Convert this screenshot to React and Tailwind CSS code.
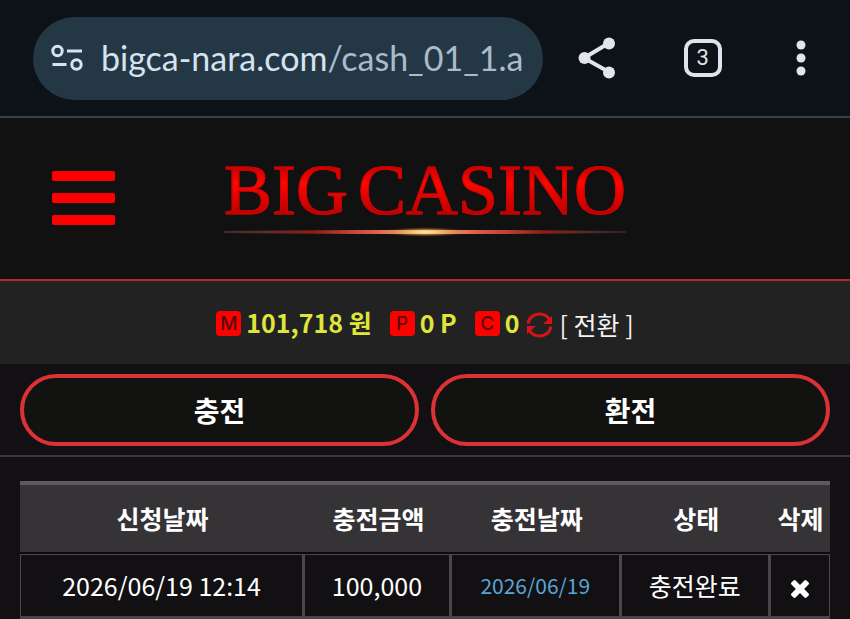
import React from 'react';

const columns = [
  { label: '신청날짜', width: 'w-[35.2%]' },
  { label: '충전금액', width: 'w-[18.1%]' },
  { label: '충전날짜', width: 'w-[21%]' },
  { label: '상태', width: 'w-[18.4%]' },
  { label: '삭제', width: 'w-[7.3%]' },
];

const rows = [
  { requestedAt: '2026/06/19 12:14', amount: '100,000', chargedAt: '2026/06/19', status: '충전완료' },
];

// 브라우저 상단 주소창
function BrowserBar() {
  return (
    <div className="flex h-[118px] items-center border-b-2 border-[#3b3f41] bg-[#0d1118] pl-[33px] pr-[36px]">
      <div className="flex h-[83px] flex-none items-center rounded-full bg-[#243745] pl-[18px] pr-[20px]">
        <button type="button" aria-label="사이트 정보" className="mr-[18px] shrink-0">
          <svg width="32" height="28" viewBox="0 0 32 28" fill="none" stroke="#d3e5f3" strokeWidth="3">
            <circle cx="6.500" cy="7" r="4.700" />
            <path d="M16 7h15M1.500 20.500h14" />
            <circle cx="25.500" cy="20.500" r="4.700" />
          </svg>
        </button>
        <a href="#" className="whitespace-nowrap font-['Lato',sans-serif] text-[34px] leading-[44px] text-[#d5e3f0]">
          bigca-nara.com<span className="text-[#a9bccb]">/cash_01_1.a</span>
        </a>
      </div>
      <div className="flex flex-1 items-center justify-between pl-[34px]">
        <button type="button" aria-label="공유">
          <svg width="40" height="42" viewBox="0 0 40 42" fill="#e1e5ea">
            <path d="M32 6L7 21l25 14" fill="none" stroke="#e1e5ea" strokeWidth="4" />
            <circle cx="32" cy="6.500" r="6" />
            <circle cx="7.500" cy="21" r="6" />
            <circle cx="32" cy="35.500" r="6" />
          </svg>
        </button>
        <button
          type="button"
          aria-label="탭 3개"
          className="flex h-[38px] w-[38px] items-center justify-center rounded-[10px] border-4 border-[#dfe3ea] font-['Roboto',sans-serif] text-[22px] leading-none text-[#dfe3ea]"
        >
          3
        </button>
        <button type="button" aria-label="메뉴" className="px-[8px]">
          <svg width="10" height="36" viewBox="0 0 10 36" fill="#e1e5ea">
            <circle cx="5" cy="5" r="4.500" />
            <circle cx="5" cy="18" r="4.500" />
            <circle cx="5" cy="31" r="4.500" />
          </svg>
        </button>
      </div>
    </div>
  );
}

function Logo() {
  return (
    <a href="#" aria-label="BIG CASINO" className="flex flex-col items-center pb-[4px]">
      <span className="flex gap-[10px] bg-linear-to-b from-[#c00000] from-15% via-[#ff0800] via-40% to-[#b80000] to-85% bg-clip-text font-['Liberation_Serif',serif] text-[72px] leading-[72px] text-transparent [-webkit-text-stroke:1px_#cc0404]">
        <span>BIG</span>
        <span>CASINO</span>
      </span>
      <svg width="402" height="12" viewBox="0 0 402 12">
        <defs>
          <linearGradient id="line">
            <stop offset="0" stopColor="#6b4a4a" stopOpacity="0.5" />
            <stop offset="0.22" stopColor="#8e1c14" />
            <stop offset="0.38" stopColor="#e0604a" />
            <stop offset="0.5" stopColor="#ffe9a0" />
            <stop offset="0.62" stopColor="#e0604a" />
            <stop offset="0.8" stopColor="#8e1c14" />
            <stop offset="1" stopColor="#6b4a4a" stopOpacity="0.3" />
          </linearGradient>
          <radialGradient id="glow">
            <stop offset="0" stopColor="#fff0b0" />
            <stop offset="0.5" stopColor="#e8a64a" stopOpacity="0.6" />
            <stop offset="1" stopColor="#a03010" stopOpacity="0" />
          </radialGradient>
        </defs>
        <path d="M0 5L130 4h142L402 5v2L272 8H130L0 7z" fill="url(#line)" />
        <ellipse cx="201" cy="6" rx="44" ry="5" fill="url(#glow)" />
      </svg>
    </a>
  );
}

function Header() {
  return (
    <header className="grid h-[163px] grid-cols-[1fr_auto_1fr] items-center border-b-2 border-[#b5262c] bg-[#121112] px-[52px] pb-[2px]">
      <button type="button" aria-label="전체 메뉴" className="flex w-[63px] flex-col gap-[12px]">
        <span className="h-[10px] rounded-[2px] bg-[#ff0000]" />
        <span className="h-[10px] rounded-[2px] bg-[#ff0000]" />
        <span className="h-[10px] rounded-[2px] bg-[#ff0000]" />
      </button>
      <Logo />
    </header>
  );
}

function Balance({ badge, value }) {
  return (
    <span className="flex items-center gap-[5px]">
      <span className="flex h-[25px] w-[25px] items-center justify-center rounded-[4px] bg-[#ff0000] font-['Inter',sans-serif] text-[19px] font-medium leading-none text-[#5e0808]">
        {badge}
      </span>
      <span className="text-[25px] font-bold text-[#dfe53a]">{value}</span>
    </span>
  );
}

function BalanceBar() {
  return (
    <section className="flex h-[83px] items-center justify-center bg-[#222223] pt-px">
      <div className="flex items-center gap-[18px]">
        <Balance badge="M" value="101,718 원" />
        <Balance badge="P" value="0 P" />
        <Balance badge="C" value="0" />
      </div>
      <button type="button" className="ml-[6px] flex items-center gap-[7px] pt-[4px] text-[25px] text-[#f2f2f2]">
        <svg width="27" height="26" viewBox="0 0 27 26" fill="none" stroke="#d51418" strokeWidth="3">
          <path d="M2 11.500C3 5.500 8 2 13.500 2c4.500 0 8 2 10 5.500" />
          <path d="M25 14.500c-1 6-6 9.500-11.500 9.500-4.500 0-8-2-10-5.500" />
          <path d="M26 4v8h-9zM1 22v-8h9z" fill="#d51418" stroke="none" />
        </svg>
        [ 전환 ]
      </button>
    </section>
  );
}

function ActionButton({ children }) {
  return (
    <button
      type="button"
      className="h-[72px] flex-1 rounded-full border-4 border-[#dc3236] bg-[#121210] text-[28px] font-bold text-white"
    >
      {children}
    </button>
  );
}

function HistoryTable() {
  return (
    <table className="w-full table-fixed border-separate border-spacing-0 text-center">
      <thead>
        <tr className="h-[73px]">
          {columns.map(({ label, width }) => (
            <th
              key={label}
              className={`${width} whitespace-nowrap border-t-4 border-b-2 border-t-[#5c5a5d] border-b-[#0b0a0b] bg-[#353336] p-0 text-[25px] font-bold`}
            >
              {label}
            </th>
          ))}
        </tr>
      </thead>
      <tbody className="[&_td]:h-[65px] [&_td]:border-t [&_td]:border-r-3 [&_td]:border-b-3 [&_td]:border-[#49474a] [&_td]:p-0 [&_td:first-child]:border-l [&_td:last-child]:border-r">
        {rows.map((row) => (
          <tr key={row.requestedAt} className="whitespace-nowrap text-[25px]">
            <td>{row.requestedAt}</td>
            <td>{row.amount}</td>
            <td className="text-[21px] text-[#58a6d6]">{row.chargedAt}</td>
            <td>{row.status}</td>
            <td>
              <button type="button" aria-label="삭제" className="align-middle">
                <svg width="18" height="18" viewBox="110 366 1188 1188" fill="#ffffff">
                  <path d="M1298 1322q0 40-28 68l-136 136q-28 28-68 28t-68-28l-294-294-294 294q-28 28-68 28t-68-28l-136-136q-28-28-28-68t28-68l294-294-294-294q-28-28-28-68t28-68l136-136q28-28 68-28t68 28l294 294 294-294q28-28 68-28t68 28l136 136q28 28 28 68t-28 68l-294 294 294 294q28 28 28 68z" />
                </svg>
              </button>
            </td>
          </tr>
        ))}
      </tbody>
    </table>
  );
}

export default function App() {
  return (
    <div className="min-h-screen bg-[#121013] font-['Noto_Sans_CJK_KR',sans-serif] text-white">
      <BrowserBar />
      <Header />
      <BalanceBar />
      <nav className="flex gap-[12px] border-b-2 border-[#39373a] px-[20px] pt-[10px] pb-[9px]">
        <ActionButton>충전</ActionButton>
        <ActionButton>환전</ActionButton>
      </nav>
      <main className="px-[20px] pt-[24px]">
        <HistoryTable />
      </main>
    </div>
  );
}
